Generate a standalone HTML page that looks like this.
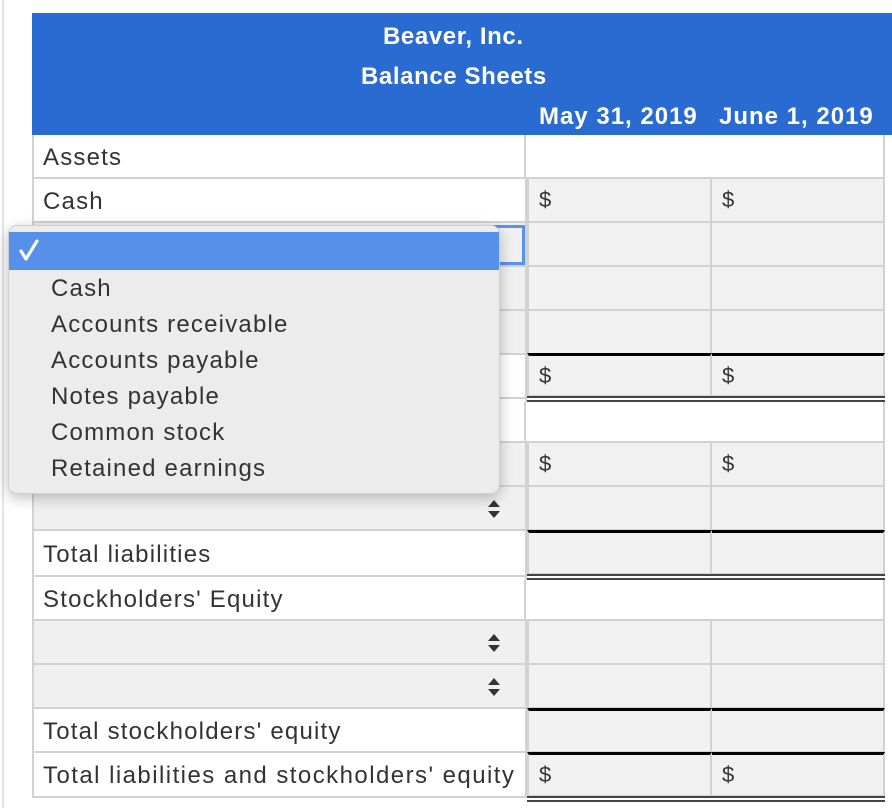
<!DOCTYPE html>
<html><head><meta charset="utf-8"><style>
*{box-sizing:border-box;margin:0;padding:0}
body{width:892px;height:808px;background:#fff;position:relative;overflow:hidden;font-family:"Liberation Sans",sans-serif;color:#333}
.a{position:absolute}
.lb{position:absolute;left:32px;width:495px;border:2px solid #d2d2d2;border-top:none;background:#fff;font-size:24px;letter-spacing:1.2px;padding-left:9px;padding-top:3px;display:flex;align-items:center;white-space:nowrap}
.sel{background:#f0f0f0}
.c{position:absolute;background:#f1f1f1;border:2px solid #d2d2d2;border-top:none;border-left:none;font-size:22px;padding-left:10px;display:flex;align-items:center}
.c1{left:527px;width:185px;border-left:2px solid #d2d2d2}
.c2{left:712px;width:173px}
.w{position:absolute;left:524px;width:361px;background:#fff;border:2px solid #d2d2d2;border-top:none}
.bt{border-top:3px solid #000}
.dbl{position:absolute;left:527px;width:358px;height:6px;border-top:2px solid #444;border-bottom:2px solid #444;background:#fff}
.arr{position:absolute;left:487px;width:14px;height:20px}
.hd{position:absolute;color:#fff;font-weight:bold;font-size:24px;letter-spacing:0.6px;white-space:nowrap}
.it{position:absolute;left:51px;font-size:24px;letter-spacing:1.2px;color:#333;white-space:nowrap}
</style></head><body>
<div class="a" style="left:2px;top:0;width:2px;height:808px;background:#e4e4e4"></div>
<div class="a" style="left:32px;top:13px;width:860px;height:122px;background:#2a6bd2"></div>
<div class="hd" style="left:383px;top:23px">Beaver, Inc.</div>
<div class="hd" style="left:361px;top:63px">Balance Sheets</div>
<div class="hd" style="left:539px;top:103px;letter-spacing:1px">May 31, 2019</div>
<div class="hd" style="left:719px;top:103px;letter-spacing:1px">June 1, 2019</div>

<div class="lb" style="top:135px;height:44px">Assets</div>
<div class="w" style="top:135px;height:44px"></div>

<div class="lb" style="top:179px;height:44px">Cash</div>
<div class="c c1" style="top:179px;height:44px">$</div><div class="c c2" style="top:179px;height:44px">$</div>

<div class="lb sel" style="top:223px;height:44px"></div>
<div class="c c1" style="top:223px;height:44px"></div><div class="c c2" style="top:223px;height:44px"></div>
<div class="lb sel" style="top:267px;height:44px"></div>
<div class="c c1" style="top:267px;height:44px"></div><div class="c c2" style="top:267px;height:44px"></div>
<div class="lb sel" style="top:311px;height:44px"></div>
<div class="c c1" style="top:311px;height:44px"></div><div class="c c2" style="top:311px;height:44px"></div>

<div class="lb" style="top:355px;height:44px"></div>
<div class="c c1 bt" style="top:353px;height:44px">$</div><div class="c c2 bt" style="top:353px;height:44px">$</div>
<div class="dbl" style="top:396px"></div>

<div class="lb" style="top:399px;height:44px"></div>
<div class="w" style="top:402px;height:41px;border-left:2px solid #d2d2d2"></div>

<div class="lb sel" style="top:443px;height:44px"></div>
<div class="c c1" style="top:443px;height:44px">$</div><div class="c c2" style="top:443px;height:44px">$</div>
<div class="lb sel" style="top:487px;height:44px"></div>
<div class="c c1" style="top:487px;height:44px"></div><div class="c c2" style="top:487px;height:44px"></div>
<svg class="arr" style="top:499px" viewBox="0 0 14 20"><path d="M7 1L13 8H1Z M7 19L13 12H1Z" fill="#333"/></svg>

<div class="lb" style="top:531px;height:46px">Total liabilities</div>
<div class="c c1 bt" style="top:530px;height:45px"></div><div class="c c2 bt" style="top:530px;height:45px"></div>
<div class="dbl" style="top:574px"></div>

<div class="lb" style="top:577px;height:44px">Stockholders' Equity</div>
<div class="w" style="top:580px;height:41px;border-left:2px solid #d2d2d2"></div>

<div class="lb sel" style="top:621px;height:44px"></div>
<div class="c c1" style="top:621px;height:44px"></div><div class="c c2" style="top:621px;height:44px"></div>
<svg class="arr" style="top:633px" viewBox="0 0 14 20"><path d="M7 1L13 8H1Z M7 19L13 12H1Z" fill="#333"/></svg>
<div class="lb sel" style="top:665px;height:44px"></div>
<div class="c c1" style="top:665px;height:44px"></div><div class="c c2" style="top:665px;height:44px"></div>
<svg class="arr" style="top:677px" viewBox="0 0 14 20"><path d="M7 1L13 8H1Z M7 19L13 12H1Z" fill="#333"/></svg>

<div class="lb" style="top:709px;height:44px">Total stockholders' equity</div>
<div class="c c1 bt" style="top:708px;height:45px"></div><div class="c c2 bt" style="top:708px;height:45px"></div>

<div class="lb" style="top:753px;height:45px;letter-spacing:1.45px">Total liabilities and stockholders' equity</div>
<div class="c c1 bt" style="top:752px;height:45px">$</div><div class="c c2 bt" style="top:752px;height:45px">$</div>
<div class="dbl" style="top:796px"></div>

<div class="a" style="left:430px;top:225px;width:95px;height:40px;border:3px solid #5b93ec;background:#f0f0f0"></div>

<div class="a" style="left:8px;top:225px;width:492px;height:269px;background:#ececec;border-radius:9px;box-shadow:0 4px 14px rgba(0,0,0,.25);border:1px solid #d0d0d0"></div>
<div class="a" style="left:9px;top:232px;width:490px;height:38px;background:#5690ea"></div>
<svg class="a" style="left:18px;top:238px" width="22" height="24" viewBox="0 0 22 24"><path d="M3 13L8 21L19 3" stroke="#fff" stroke-width="3.2" fill="none" stroke-linecap="round" stroke-linejoin="round"/></svg>
<div class="it" style="top:275px">Cash</div>
<div class="it" style="top:311px">Accounts receivable</div>
<div class="it" style="top:347px">Accounts payable</div>
<div class="it" style="top:383px">Notes payable</div>
<div class="it" style="top:419px">Common stock</div>
<div class="it" style="top:455px">Retained earnings</div>
</body></html>
